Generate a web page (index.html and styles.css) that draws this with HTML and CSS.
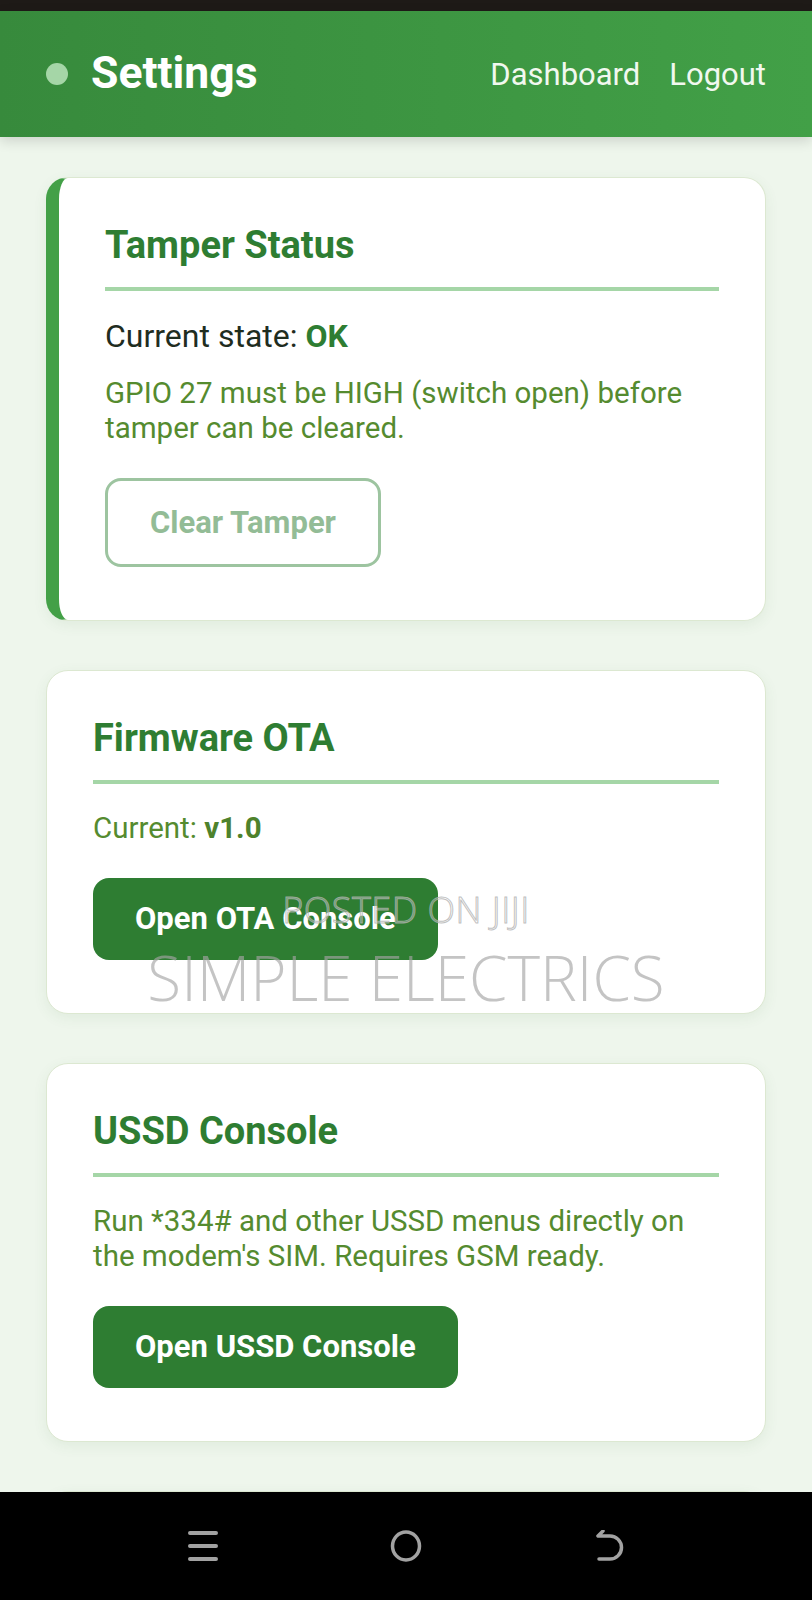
FILE: index.html
```html
<!DOCTYPE html>
<html lang="en">
<head>
    <meta charset="UTF-8">
    <title>Settings</title>
    <meta name="viewport" content="width=device-width, initial-scale=1">
    <link rel="stylesheet" href="styles.css">
</head>
<body>
<div class="statusbar"></div>

<header class="topbar">
    <div class="brand">
        <span class="dot"></span>
        <h1>Settings</h1>
    </div>
    <nav class="links">
        <a href="#">Dashboard</a>
        <a href="#">Logout</a>
    </nav>
</header>

<main class="content">
    <section class="card card-alert">
        <h2>Tamper Status</h2>
        <p class="state">Current state: <b class="ok">OK</b></p>
        <p class="hint">GPIO 27 must be HIGH (switch open) before tamper can be cleared.</p>
        <button type="button" class="btn btn-outline" disabled>Clear Tamper</button>
    </section>

    <section class="card">
        <h2>Firmware OTA</h2>
        <p class="hint">Current: <b class="version">v1.0</b></p>
        <button type="button" class="btn">Open OTA Console</button>
    </section>

    <section class="card">
        <h2>USSD Console</h2>
        <p class="hint">Run *334# and other USSD menus directly on the modem's SIM. Requires GSM ready.</p>
        <button type="button" class="btn">Open USSD Console</button>
    </section>

    <section class="card card-more"></section>
</main>

<div class="watermark">
    <div class="wm-small">POSTED ON JIJI</div>
    <div class="wm-big">SIMPLE ELECTRICS</div>
</div>

<footer class="navbar">
    <svg class="navicon" viewBox="0 0 32 32" width="32" height="32">
        <path d="M3 3 H29 M3 16 H29 M3 29 H29" stroke="#a2a2a2" stroke-width="4" stroke-linecap="round" fill="none"/>
    </svg>
    <svg class="navicon" viewBox="0 0 32 32" width="32" height="32">
        <ellipse cx="16" cy="16" rx="13.5" ry="14" stroke="#a2a2a2" stroke-width="3.5" fill="none"/>
    </svg>
    <svg class="navicon" viewBox="0 0 32 32" width="32" height="32">
        <path d="M5 6 H17 A10.5 10.5 0 0 1 17 29 H6 M5 6 L10 1" stroke="#a2a2a2" stroke-width="3.5" stroke-linecap="round" stroke-linejoin="round" fill="none"/>
    </svg>
</footer>
</body>
</html>
```

FILE: styles.css
```css
body {
    font-family: Roboto, 'Liberation Sans', sans-serif;
    background: #eef6ec;
    color: #1f2d1f;
    margin: 0;
    height: 1600px;
    display: flex;
    flex-direction: column;
    overflow: hidden;
    position: relative;
}
.statusbar {
    height: 11px;
    background: #1e1a17;
    flex-shrink: 0;
}
.topbar {
    height: 126px;
    flex-shrink: 0;
    display: flex;
    align-items: center;
    justify-content: space-between;
    padding: 0 46px;
    background: linear-gradient(90deg, #378a3c, #42a047);
    box-shadow: 0 4px 12px rgba(0, 0, 0, 0.14);
    position: relative;
    z-index: 1;
}
.brand {
    display: flex;
    align-items: center;
    gap: 23px;
}
.dot {
    width: 22px;
    height: 22px;
    border-radius: 50%;
    background: #a5d6a7;
}
.brand h1 {
    margin: 0;
    font-size: 44.5px;
    font-weight: 700;
    color: #fff;
    line-height: 1;
    padding-bottom: 2px;
}
.links {
    display: flex;
    gap: 29px;
}
.links a {
    color: #f1f8ef;
    text-decoration: none;
    font-size: 31px;
}
.content {
    flex: 1;
    overflow: hidden;
    padding: 40px 46px 0;
    display: flex;
    flex-direction: column;
    gap: 49px;
}
.card {
    background: #fff;
    border: 1px solid #dce8d1;
    border-radius: 22px;
    padding: 45px 46px 53px;
    box-shadow: 0 4px 14px rgba(60, 110, 60, 0.08);
    display: flex;
    flex-direction: column;
    align-items: flex-start;
    flex-shrink: 0;
}
.card-alert {
    border-left: 13px solid #43a047;
}
.card-more {
    height: 200px;
}
h2 {
    align-self: stretch;
    margin: 0;
    font-size: 38px;
    line-height: 44px;
    font-weight: 700;
    color: #2e7d32;
    padding-bottom: 20px;
    border-bottom: 4px solid #a5d6a7;
}
.card p {
    margin: 27px 0 0;
    font-size: 29.5px;
    line-height: 35px;
}
.card p.state {
    font-size: 32px;
    line-height: 36px;
}
.card p + p {
    margin-top: 22px;
}
.hint {
    color: #558b2f;
}
.ok {
    color: #2e7d32;
}
.version {
    color: #4e822c;
}
.btn {
    margin-top: 32px;
    font-family: inherit;
    font-size: 31px;
    font-weight: 700;
    line-height: 34px;
    padding: 24px 42px;
    color: #fff;
    background: #2e7d32;
    border: none;
    border-radius: 16px;
}
.btn-outline {
    line-height: 35px;
    background: #fff;
    color: #93bc96;
    border: 3px solid #9dc4a0;
}
.watermark {
    position: absolute;
    top: 879px;
    left: 0;
    right: 0;
    text-align: center;
    font-family: 'Open Sans', sans-serif;
    font-weight: 300;
    pointer-events: none;
}
.wm-small {
    font-size: 36px;
    line-height: 62px;
    letter-spacing: 0.5px;
    color: rgba(255, 255, 255, 0.25);
    -webkit-text-stroke: 1px rgba(175, 175, 175, 0.8);
}
.wm-big {
    font-size: 62px;
    line-height: 72px;
    color: rgba(165, 165, 165, 0.65);
}
.navbar {
    height: 108px;
    flex-shrink: 0;
    background: #000;
    display: flex;
    align-items: center;
    justify-content: center;
    gap: 171px;
    position: relative;
    z-index: 1;
}
```
